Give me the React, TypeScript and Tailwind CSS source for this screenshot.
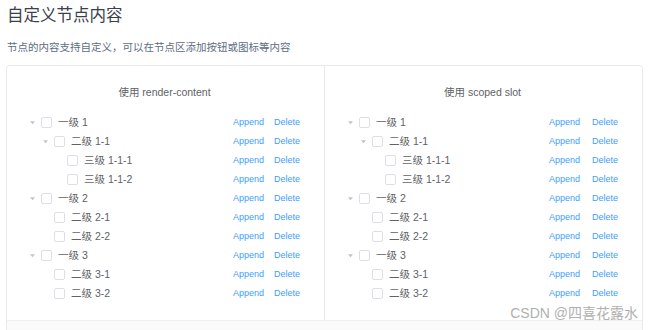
import React from 'react'

type Node = { label: string; level: number; parent: boolean }

const nodes: Node[] = [
  { label: '一级 1', level: 0, parent: true },
  { label: '二级 1-1', level: 1, parent: true },
  { label: '三级 1-1-1', level: 2, parent: false },
  { label: '三级 1-1-2', level: 2, parent: false },
  { label: '一级 2', level: 0, parent: true },
  { label: '二级 2-1', level: 1, parent: false },
  { label: '二级 2-2', level: 1, parent: false },
  { label: '一级 3', level: 0, parent: true },
  { label: '二级 3-1', level: 1, parent: false },
  { label: '二级 3-2', level: 1, parent: false },
]

const indent = ['pl-0', 'pl-[13px]', 'pl-[26px]']

function Caret({ show }: { show: boolean }) {
  return (
    <span className="w-[7px] h-[7px] flex items-center justify-center shrink-0">
      {show && (
        <svg width="7" height="7" viewBox="0 0 7 7">
          <path d="M1 2.2 L6 2.2 L3.5 5.2 Z" fill="#c0c4cc" />
        </svg>
      )}
    </span>
  )
}

function Tree({ wide }: { wide?: boolean }) {
  return (
    <div className="mt-[14px]">
      {nodes.map((n, i) => (
        <div key={i} className="h-[19px] flex items-center justify-between">
          <div className={`flex items-center ${indent[n.level]}`}>
            <Caret show={n.parent} />
            <span className="ml-[5px] w-[11px] h-[11px] border border-[#dcdfe6] rounded-[2px] bg-white shrink-0" />
            <span className="ml-[6px] text-[10.5px] text-[#606266]">{n.label}</span>
          </div>
          <div className="flex items-center text-[9px] text-[#409eff]">
            <span>Append</span>
            <span className={wide ? 'ml-[12px]' : 'ml-[10px]'}>Delete</span>
          </div>
        </div>
      ))}
    </div>
  )
}

function Column({ title, divider }: { title: string; divider?: boolean }) {
  return (
    <div className={`flex-1 pt-[19px] pb-[17px] pl-[22px] pr-[24px] ${divider ? 'border-r border-[#ebebeb]' : ''}`}>
      <div className="text-center text-[10.5px] leading-[14px] text-[#5e6266]">{title}</div>
      <Tree wide={!divider} />
    </div>
  )
}

export default function App() {
  return (
    <div
      className="relative w-[650px] h-[330px] overflow-hidden bg-white"
      style={{ fontFamily: '"Liberation Sans", "Noto Sans CJK SC", sans-serif' }}
    >
      <h3 className="pl-[7px] pt-[4px] text-[16.5px] leading-[22px] font-normal text-[#3a414b]">自定义节点内容</h3>
      <p className="pl-[7px] mt-[13px] text-[10.5px] leading-[16px] text-[#5e6d82]">
        节点的内容支持自定义，可以在节点区添加按钮或图标等内容
      </p>

      <div className="ml-[6px] mt-[10px] w-[637px] border border-[#ebebeb] rounded-[3px]">
        <div className="flex">
          <Column title="使用 render-content" divider />
          <Column title="使用 scoped slot" />
        </div>
        <div className="h-[40px] bg-[#fafafa] border-t border-[#f0f0f0]" />
      </div>

      <div className="absolute right-[12px] bottom-[8px] text-[14px] leading-[18px] text-[#b0b0b0]">
        CSDN @四喜花露水
      </div>
    </div>
  )
}
